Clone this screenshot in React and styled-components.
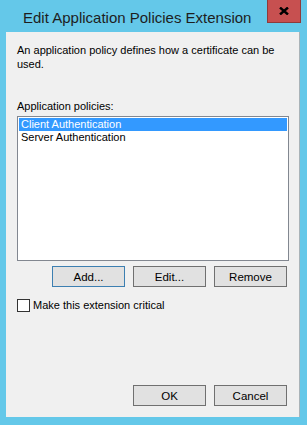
import React, { useState } from "react"
import styled, { createGlobalStyle } from "styled-components"

const GlobalStyle = createGlobalStyle`
  html, body {
    margin: 0;
    padding: 0;
    background: #64c8e9;
  }
  * {
    box-sizing: border-box;
  }
`

const Frame = styled.div`
  width: 307px;
  height: 425px;
  background: #64c8e9;
  display: flex;
  flex-direction: column;
  font-family: "Segoe UI", "Liberation Sans", Arial, sans-serif;
  font-size: 11px;
  color: #000;
  overflow: hidden;
`

const TitleBar = styled.div`
  height: 32px;
  display: flex;
  align-items: flex-start;
`

const Title = styled.div`
  flex: 1;
  padding: 8px 0 0 23px;
  font-size: 15px;
  line-height: 20px;
  color: #1e1e1e;
  white-space: nowrap;
`

const CloseButton = styled.div`
  width: 34px;
  height: 23px;
  margin-right: 6px;
  background: #c75050;
  border: 1px solid #8e3b3b;
  border-top: none;
  display: flex;
  align-items: center;
  justify-content: center;
`

const Client = styled.div`
  flex: 1;
  margin: 0 7px 8px 6px;
  background: #f0f0f0;
  border-right: 1px solid #a9b3b8;
  padding: 11px 10px 11px 11px;
  display: flex;
  flex-direction: column;
`

const Intro = styled.p`
  margin: 0;
  line-height: 14px;
  padding-right: 10px;
`

const Label = styled.div`
  margin-top: 28px;
  line-height: 14px;
`

const ListBox = styled.div`
  margin-top: 3px;
  height: 145px;
  background: #fff;
  border: 1px solid #828790;
  padding: 1px;
`

const ListItem = styled.div`
  height: 13px;
  line-height: 13px;
  padding-left: 2px;
  white-space: nowrap;
  background: ${(p) => (p.selected ? "#3399ff" : "transparent")};
  color: ${(p) => (p.selected ? "#fff" : "#000")};
  cursor: default;
`

const ButtonRow = styled.div`
  display: flex;
  justify-content: flex-end;
  gap: 8px;
  padding-right: 2px;
  margin-top: ${(p) => p.top || 0}px;
`

const Button = styled.button`
  width: 73px;
  height: 21px;
  padding: 0;
  font: inherit;
  font-size: 11.5px;
  color: #000;
  background: #e1e1e1;
  border: 1px solid ${(p) => (p.primary ? "#3c7fb1" : "#707070")};
  outline: none;
`

const CheckRow = styled.label`
  margin-top: 12px;
  display: flex;
  align-items: center;
  gap: 3px;
  line-height: 13px;
`

const CheckBox = styled.span`
  width: 13px;
  height: 13px;
  background: #fff;
  border: 1px solid #333;
  flex: none;
`

const Spacer = styled.div`
  flex: 1;
`

const policies = ["Client Authentication", "Server Authentication"]

const App = () => {
  const [selected, setSelected] = useState(0)

  return (
    <Frame>
      <GlobalStyle />
      <TitleBar>
        <Title>Edit Application Policies Extension</Title>
        <CloseButton>
          <svg width="10" height="8" viewBox="0 0 10 8">
            <path d="M1 0.5 L9 7.5 M9 0.5 L1 7.5" stroke="#000" strokeWidth="2.4" />
          </svg>
        </CloseButton>
      </TitleBar>

      <Client>
        <Intro>An application policy defines how a certificate can be used.</Intro>
        <Label>Application policies:</Label>
        <ListBox>
          {policies.map((name, i) => (
            <ListItem key={name} selected={i === selected} onClick={() => setSelected(i)}>
              {name}
            </ListItem>
          ))}
        </ListBox>
        <ButtonRow top={5}>
          <Button primary>Add...</Button>
          <Button>Edit...</Button>
          <Button>Remove</Button>
        </ButtonRow>
        <CheckRow>
          <CheckBox />
          Make this extension critical
        </CheckRow>
        <Spacer />
        <ButtonRow>
          <Button>OK</Button>
          <Button>Cancel</Button>
        </ButtonRow>
      </Client>
    </Frame>
  )
}

export default App
